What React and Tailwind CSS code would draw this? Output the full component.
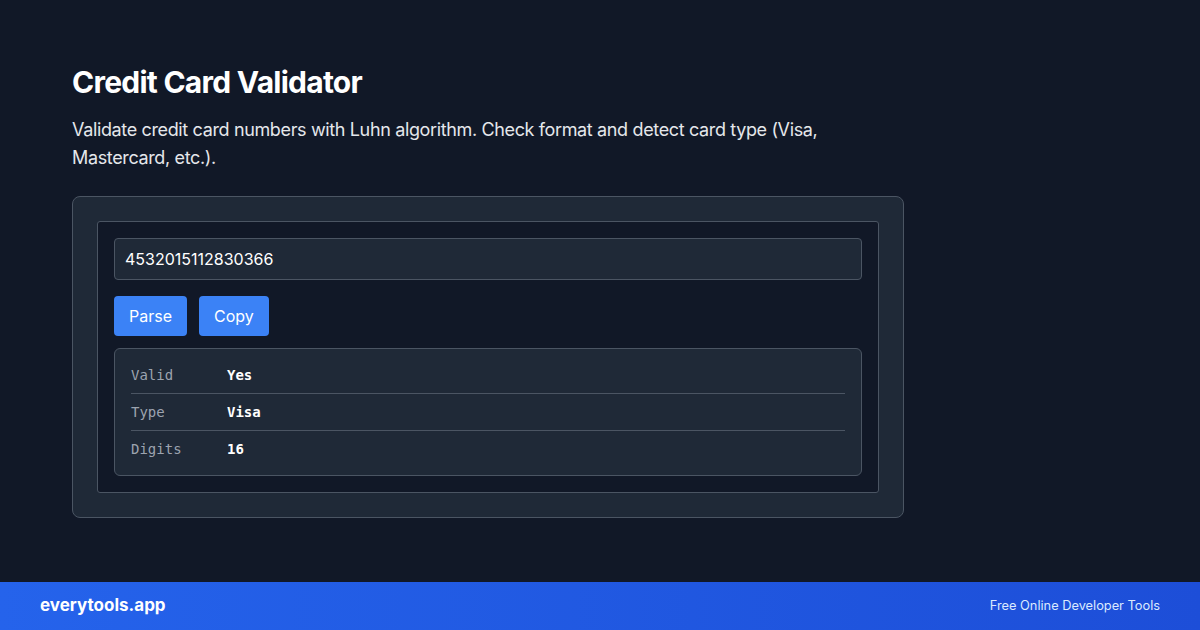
import React from 'react';

const rows = [
  { label: 'Valid', value: 'Yes' },
  { label: 'Type', value: 'Visa' },
  { label: 'Digits', value: '16' },
];

export default function App() {
  return (
    <div className="flex h-[630px] w-[1200px] flex-col bg-[#111827] font-['Inter','Noto_Sans',sans-serif] text-white">
      <main className="flex-1 px-[72px] pt-16">
        <h1 className="text-3xl font-bold leading-9 tracking-[-0.025em]">Credit Card Validator</h1>
        <p className="mt-4 max-w-[832px] text-lg leading-7 tracking-[-0.02em] text-[#e5e7eb]">
          Validate credit card numbers with Luhn algorithm. Check format and detect card type (Visa, Mastercard, etc.).
        </p>

        <div className="mt-6 w-[832px] rounded-lg border border-[#4b5563] bg-[#1f2937] p-6">
          <div className="rounded-[3px] border border-[#4b5563] bg-[#111827] p-4">
            <input
              readOnly
              value="4532015112830366"
              className="h-[42px] w-full rounded border border-[#4b5563] bg-[#1f2937] px-2.5 text-base text-white outline-none"
            />
            <div className="mt-4 flex gap-3">
              <button className="rounded bg-[#3b82f6] px-[15px] py-2 text-base leading-6 text-white">Parse</button>
              <button className="rounded bg-[#3b82f6] px-[15px] py-2 text-base leading-6 text-white">Copy</button>
            </div>
            <div className="mt-3 rounded-md border border-[#4b5563] bg-[#1f2937] px-4 py-2 font-['DejaVu_Sans_Mono',monospace] text-sm">
              {rows.map((r, i) => (
                <div
                  key={r.label}
                  className={`flex py-2 leading-5 ${i < rows.length - 1 ? 'border-b border-[#4b5563]' : ''}`}
                >
                  <span className="w-24 text-[#9ca3af]">{r.label}</span>
                  <span className="font-semibold text-white">{r.value}</span>
                </div>
              ))}
            </div>
          </div>
        </div>
      </main>

      <footer className="flex h-12 items-center justify-between bg-gradient-to-r from-[#2563eb] to-[#1d4ed8] px-10">
        <span className="text-[17px] font-bold">everytools.app</span>
        <span className="text-[12.8px] text-[#dbeafe]">Free Online Developer Tools</span>
      </footer>
    </div>
  );
}
